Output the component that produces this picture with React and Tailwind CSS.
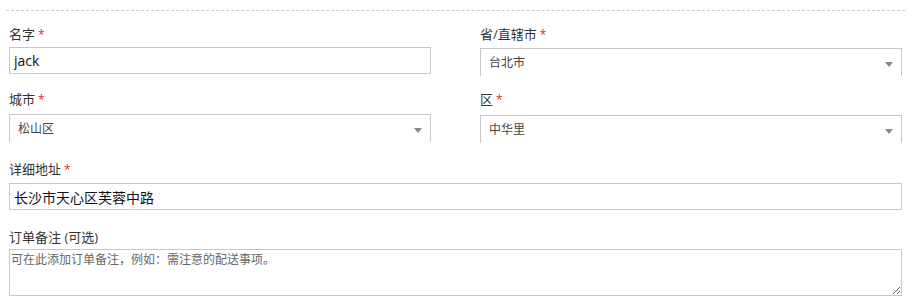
const font = { fontFamily: '"Open Sans", "Noto Sans CJK SC", sans-serif' };

const Label = ({ children, required, className = "" }) => (
  <div className={`h-[20px] text-[13px] leading-[20px] text-[#333] ${className}`}>
    {children}
    {required && <span className="ml-[3px] text-[12px] text-[#e02b27]">*</span>}
  </div>
);

const FakeSelect = ({ value, className = "" }) => (
  <div className={`relative flex h-[28px] w-full items-center border-x border-t border-[#c8c8c8] bg-white pl-[8px] text-[12px] text-[#444] ${className}`}>
    <span>{value}</span>
    <span className="absolute right-[8px] top-[13px] h-0 w-0 border-x-[4px] border-t-[5px] border-x-transparent border-t-[#888]" />
  </div>
);

const TextInput = ({ value, className = "" }) => (
  <input
    readOnly
    value={value}
    className={`block h-[27px] w-full border border-[#c8c8c8] bg-white px-[4px] text-[14px] text-[#111] outline-none ${className}`}
    style={font}
  />
);

export default function App() {
  return (
    <div className="h-[302px] w-[911px] bg-white" style={font}>
      <div className="ml-[6px] w-[899px] pt-[10px]">
        <div className="border-t border-dashed border-[#ccc]" />
      </div>

      <div className="pl-[9px] w-[902px]">
        <div className="mt-[13px] flex gap-[49px]">
          <div className="w-[422px]">
            <Label required>名字</Label>
            <TextInput value="jack" className="mt-[3px]" />
          </div>
          <div className="w-[422px]">
            <Label required>省/直辖市</Label>
            <FakeSelect value="台北市" className="mt-[4px]" />
          </div>
        </div>

        <div className="mt-[13px] flex gap-[49px]">
          <div className="w-[422px]">
            <Label required>城市</Label>
            <FakeSelect value="松山区" className="mt-[5px]" />
          </div>
          <div className="w-[422px]">
            <Label required>区</Label>
            <FakeSelect value="中华里" className="mt-[6px]" />
          </div>
        </div>

        <div className="mt-[16px]">
          <Label required>详细地址</Label>
          <TextInput value="长沙市天心区芙蓉中路" className="mt-[4px]" />
        </div>

        <div className="mt-[17px]">
          <Label>订单备注 (可选)</Label>
          <textarea
            readOnly
            placeholder="可在此添加订单备注，例如：需注意的配送事项。"
            className="mt-[2px] block h-[47px] w-full border border-[#c8c8c8] bg-white px-[1px] py-[1px] text-[12px] leading-[18px] text-[#333] outline-none placeholder:text-[#666]"
            style={font}
          />
        </div>
      </div>
    </div>
  );
}
